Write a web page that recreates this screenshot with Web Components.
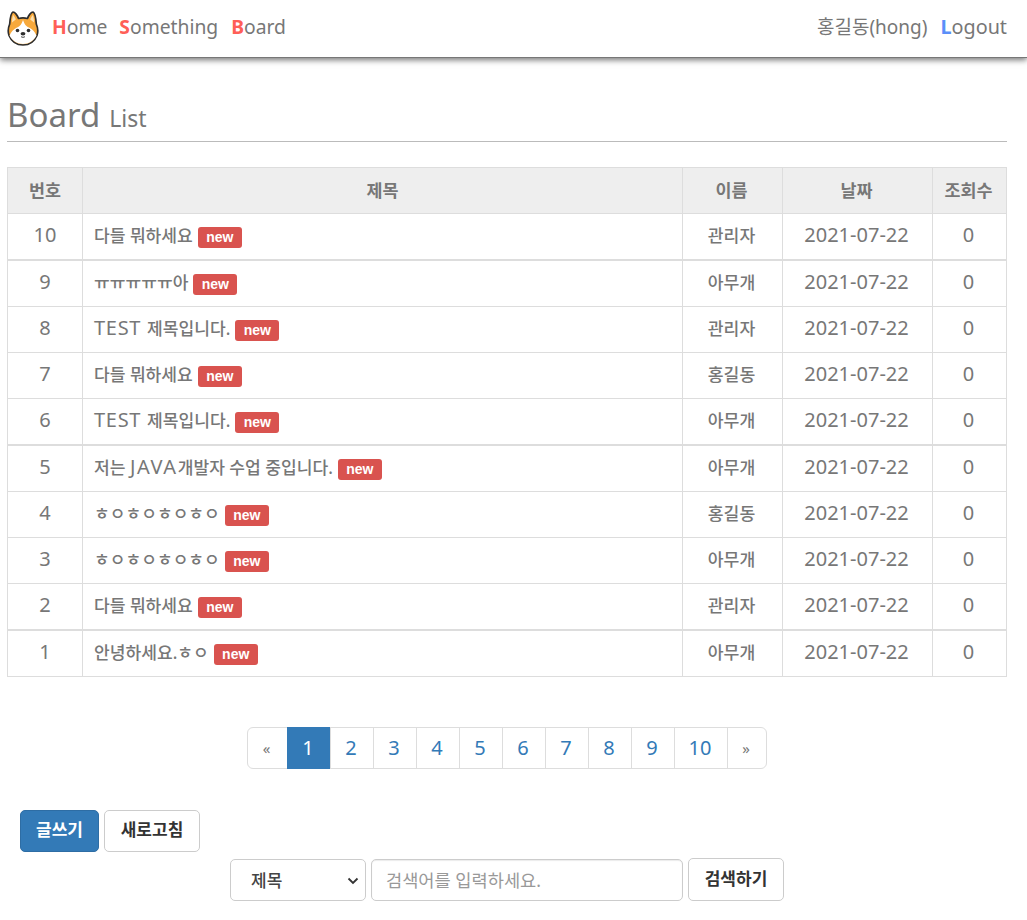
<!DOCTYPE html>
<html lang="ko"><head><meta charset="utf-8"><title>Board List</title>
<style>
html,body{margin:0;padding:0;background:#fff;height:920px;overflow:hidden}
body{font-family:"Noto Sans","Noto Sans CJK KR",sans-serif;color:#777}
</style></head><body>
<app-header></app-header>
<board-page></board-page>
<script>
const FONT='"Noto Sans","Noto Sans CJK KR",sans-serif';
class DogLogo extends HTMLElement{constructor(){super();this.attachShadow({mode:'open'}).innerHTML=`<style>:host{display:block;width:32px;height:36px;margin-top:2px}svg{display:block}</style>
<svg width="32" height="36" viewBox="0 0 32 36">
<path d="M6 2C8 2 10.5 5.5 11.5 8.5C14.5 7.6 17.5 7.6 20.5 8.5C21.5 5.5 24 2 26 2C28.5 3 29 10 29.3 14C31 18 31.2 22 30 25.5C27.5 31.5 22 35 16 35C10 35 4.5 31.5 2 25.5C.8 22 1 18 2.7 14C3 10 3.5 3 6 2Z" fill="#f7a93c" stroke="#2e2e2e" stroke-width="1.7" stroke-linejoin="round"/>
<path d="M6.2 5C5.2 7.5 5 10 5 12.5L8.8 9.6C8.2 8 7.3 6.2 6.2 5Z" fill="#fde0b0"/>
<path d="M25.8 5C26.8 7.5 27 10 27 12.5L23.2 9.6C23.8 8 24.7 6.2 25.8 5Z" fill="#fde0b0"/>
<path d="M16 10C14.4 14 13.6 16 10 17.5C6.5 19 4 22 2.6 25.6C5 31 10.5 34.1 16 34.1C21.5 34.1 27 31 29.4 25.6C28 22 25.5 19 22 17.5C18.4 16 17.6 14 16 10Z" fill="#fff"/>
<circle cx="10.5" cy="20.5" r="1.8" fill="#2e2e2e"/><circle cx="21.5" cy="20.5" r="1.8" fill="#2e2e2e"/>
<ellipse cx="16" cy="23.8" rx="2.4" ry="1.7" fill="#2e2e2e"/><path d="M14 26.6C15 27.5 17 27.5 18 26.6" fill="none" stroke="#2e2e2e" stroke-width=".9"/>
</svg>`}}
customElements.define('dog-logo',DogLogo);

class NavLink extends HTMLElement{constructor(){super();this.attachShadow({mode:'open'}).innerHTML=`<style>:host{display:inline-block;font:19.3px/28px ${FONT};color:#777;white-space:nowrap}
b{font-weight:700;color:var(--cap,#ff5f57)}</style><b part="cap"></b><slot></slot>`}
connectedCallback(){this.shadowRoot.querySelector('b').textContent=this.getAttribute('cap')||''}}
customElements.define('nav-link',NavLink);

class AppHeader extends HTMLElement{constructor(){super();this.attachShadow({mode:'open'}).innerHTML=`<style>
:host{display:flex;align-items:center;box-sizing:border-box;height:58px;padding:0 20px 3px 7px;background:#fff;border-bottom:1px solid #777;box-shadow:0 2px 6px rgba(0,0,0,.55)}
.left{display:flex;align-items:center;gap:12px}
dog-logo{margin-right:1px}
.board{margin-left:1px}
.right{margin-left:auto;display:flex;gap:13px;align-items:center}
.user{font:19px/28px ${FONT};color:#777}
</style>
<div class="left"><dog-logo></dog-logo><nav-link cap="H">ome</nav-link><nav-link cap="S">omething</nav-link><nav-link class="board" cap="B">oard</nav-link></div>
<div class="right"><span class="user">홍길동(hong)</span><nav-link cap="L" style="--cap:#5b8ff9;font-size:19.8px">ogout</nav-link></div>`}}
customElements.define('app-header',AppHeader);

class PageTitle extends HTMLElement{constructor(){super();this.attachShadow({mode:'open'}).innerHTML=`<style>
:host{display:block;box-sizing:border-box;height:84px;padding-top:37px;border-bottom:1px solid #bbb;color:#777;font-family:${FONT}}
.t{font-size:33px;line-height:40px}.s{font-size:23px;margin-left:9px}
</style><span class="t"><slot></slot></span><span class="s"><slot name="sub"></slot></span>`}}
customElements.define('page-title',PageTitle);

class NewBadge extends HTMLElement{constructor(){super();this.attachShadow({mode:'open'}).innerHTML=`<style>
:host{display:block;box-sizing:border-box;flex:none;height:21px;width:44px;background:#d9534f;color:#fff;border-radius:3px;font:700 14px/20px "Liberation Sans",Arial,sans-serif;text-align:center;margin-left:5px;margin-top:6px}
</style>new`}}
customElements.define('new-badge',NewBadge);

const ROWS=[[10,'다들 뭐하세요','관리자',1],[9,'ㅠㅠㅠㅠㅠ아','아무개',0],[8,'<span class="l">TEST </span>제목입니다.','관리자',0],[7,'다들 뭐하세요','홍길동',0],[6,'<span class="l">TEST </span>제목입니다.','아무개',1],[5,'저는 <span class="j">JAVA</span>개발자 수업 중입니다.','아무개',0],[4,'ㅎㅇㅎㅇㅎㅇㅎㅇ','홍길동',0],[3,'ㅎㅇㅎㅇㅎㅇㅎㅇ','아무개',0],[2,'다들 뭐하세요','관리자',1],[1,'안녕하세요.ㅎㅇ','아무개',0]];
class BoardTable extends HTMLElement{constructor(){super();
const rows=ROWS.map(r=>`<div class="row${r[3]?' thick':''}"><div class="c num">${r[0]}</div><div class="c title"><span>${r[1]}</span><new-badge></new-badge></div><div class="c name">${r[2]}</div><div class="c num">2021-07-22</div><div class="c num">0</div></div>`).join('');
this.attachShadow({mode:'open'}).innerHTML=`<style>
:host{display:block;margin-top:25px;font-family:${FONT};color:#777;border:1px solid #ddd;border-bottom:0;width:1000px;box-sizing:border-box}
.row{display:grid;grid-template-columns:74px 600px 100px 150px 1fr;height:45px;border-bottom:1px solid #ddd}
.row.head{background:#eee}
.row.thick{border-bottom-width:2px}
.c{display:flex;align-items:center;justify-content:center;border-left:1px solid #ddd;font-size:20px;white-space:nowrap;box-sizing:border-box;padding:0 2px 4px 0}
.c:first-child{border-left:0;padding-right:0}
.row.head .c{font-size:17.4px;font-weight:700;padding-bottom:3px}
.title{justify-content:flex-start;padding-left:11px;font-size:17.1px;font-weight:500}
.row.head .c:nth-child(2){padding-right:0}
.l{font-size:20px;letter-spacing:.7px;font-weight:400}
.j{font-size:20px;letter-spacing:1.6px;font-weight:400}
.name{font-size:17.2px;font-weight:500}
</style>
<div class="row head"><div class="c">번호</div><div class="c">제목</div><div class="c">이름</div><div class="c">날짜</div><div class="c">조회수</div></div>${rows}`}}
customElements.define('board-table',BoardTable);

class PagerBar extends HTMLElement{constructor(){super();
const n=[1,2,3,4,5,6,7,8,9,10].map(i=>`<a class="${i==1?'on':''}${i==10?' ten':''}">${i}</a>`).join('');
this.attachShadow({mode:'open'}).innerHTML=`<style>
:host{display:flex;justify-content:center;margin-top:50px;font-family:${FONT}}
.p{display:flex;height:42px;border:1px solid #ddd;border-radius:6px;box-sizing:border-box;background:#fff}
a{display:flex;align-items:center;justify-content:center;width:43px;box-sizing:border-box;border-left:1px solid #ddd;color:#337ab7;font-size:20px;padding:0 2px 1px 0}
a.ten{width:53px}
a.e{width:39px;color:#777;font-size:15px;border-left:0}
a.e.last{border-left:1px solid #ddd}
a.on{background:#337ab7;color:#fff;border-left-color:#337ab7;margin:-1px 0}
</style><div class="p"><a class="e">«</a>${n}<a class="e last">»</a></div>`}}
customElements.define('pager-bar',PagerBar);

class UiButton extends HTMLElement{constructor(){super();this.attachShadow({mode:'open'}).innerHTML=`<style>
:host{display:inline-flex;align-items:center;justify-content:center;box-sizing:border-box;height:42px;padding:0 16px 2px;border:1px solid #ccc;border-radius:5px;background:#fff;color:#333;font:700 17px/24px ${FONT};white-space:nowrap}
:host([primary]){background:#337ab7;border-color:#2e6da4;color:#fff}
</style><slot></slot>`}}
customElements.define('ui-button',UiButton);

class SearchBar extends HTMLElement{constructor(){super();this.attachShadow({mode:'open'}).innerHTML=`<style>
:host{display:flex;gap:5px;align-items:flex-start;box-sizing:border-box;padding-left:223px;margin-top:6px;font-family:${FONT}}
.sel{box-sizing:border-box;width:136px;height:42px;margin-top:1px;border:1px solid #ccc;border-radius:5px;display:flex;align-items:center;padding:0 6px 2px 20px;color:#444;font-size:17px;font-weight:500}
.sel svg{margin-left:auto;margin-top:3px}
.inp{box-sizing:border-box;width:312px;height:42px;margin-top:1px;border:1px solid #ccc;border-radius:5px;display:flex;align-items:center;padding:0 0 2px 14px;color:#999;font-size:17.6px;box-shadow:inset 0 1px 1px rgba(0,0,0,.08)}
ui-button{height:43px;width:96px;padding:0 0 2px}
</style>
<div class="sel">제목<svg width="12" height="8" viewBox="0 0 12 8"><path d="M1.5 1.5L6 6L10.5 1.5" fill="none" stroke="#333" stroke-width="1.8"/></svg></div>
<div class="inp">검색어를 입력하세요.</div><ui-button>검색하기</ui-button>`}}
customElements.define('search-bar',SearchBar);

class BoardPage extends HTMLElement{constructor(){super();this.attachShadow({mode:'open'}).innerHTML=`<style>
:host{display:block;box-sizing:border-box;width:1007px;padding-left:7px}
.actions{display:flex;gap:5px;margin-top:41px;padding-left:13px}
.actions ui-button:first-child{width:79px;padding:0 0 2px}
.actions ui-button:last-child{width:96px;padding:0 0 2px}
</style>
<page-title>Board<span slot="sub">List</span></page-title>
<board-table></board-table>
<pager-bar></pager-bar>
<div class="actions"><ui-button primary>글쓰기</ui-button><ui-button>새로고침</ui-button></div>
<search-bar></search-bar>`}}
customElements.define('board-page',BoardPage);
</script>
</body></html>
